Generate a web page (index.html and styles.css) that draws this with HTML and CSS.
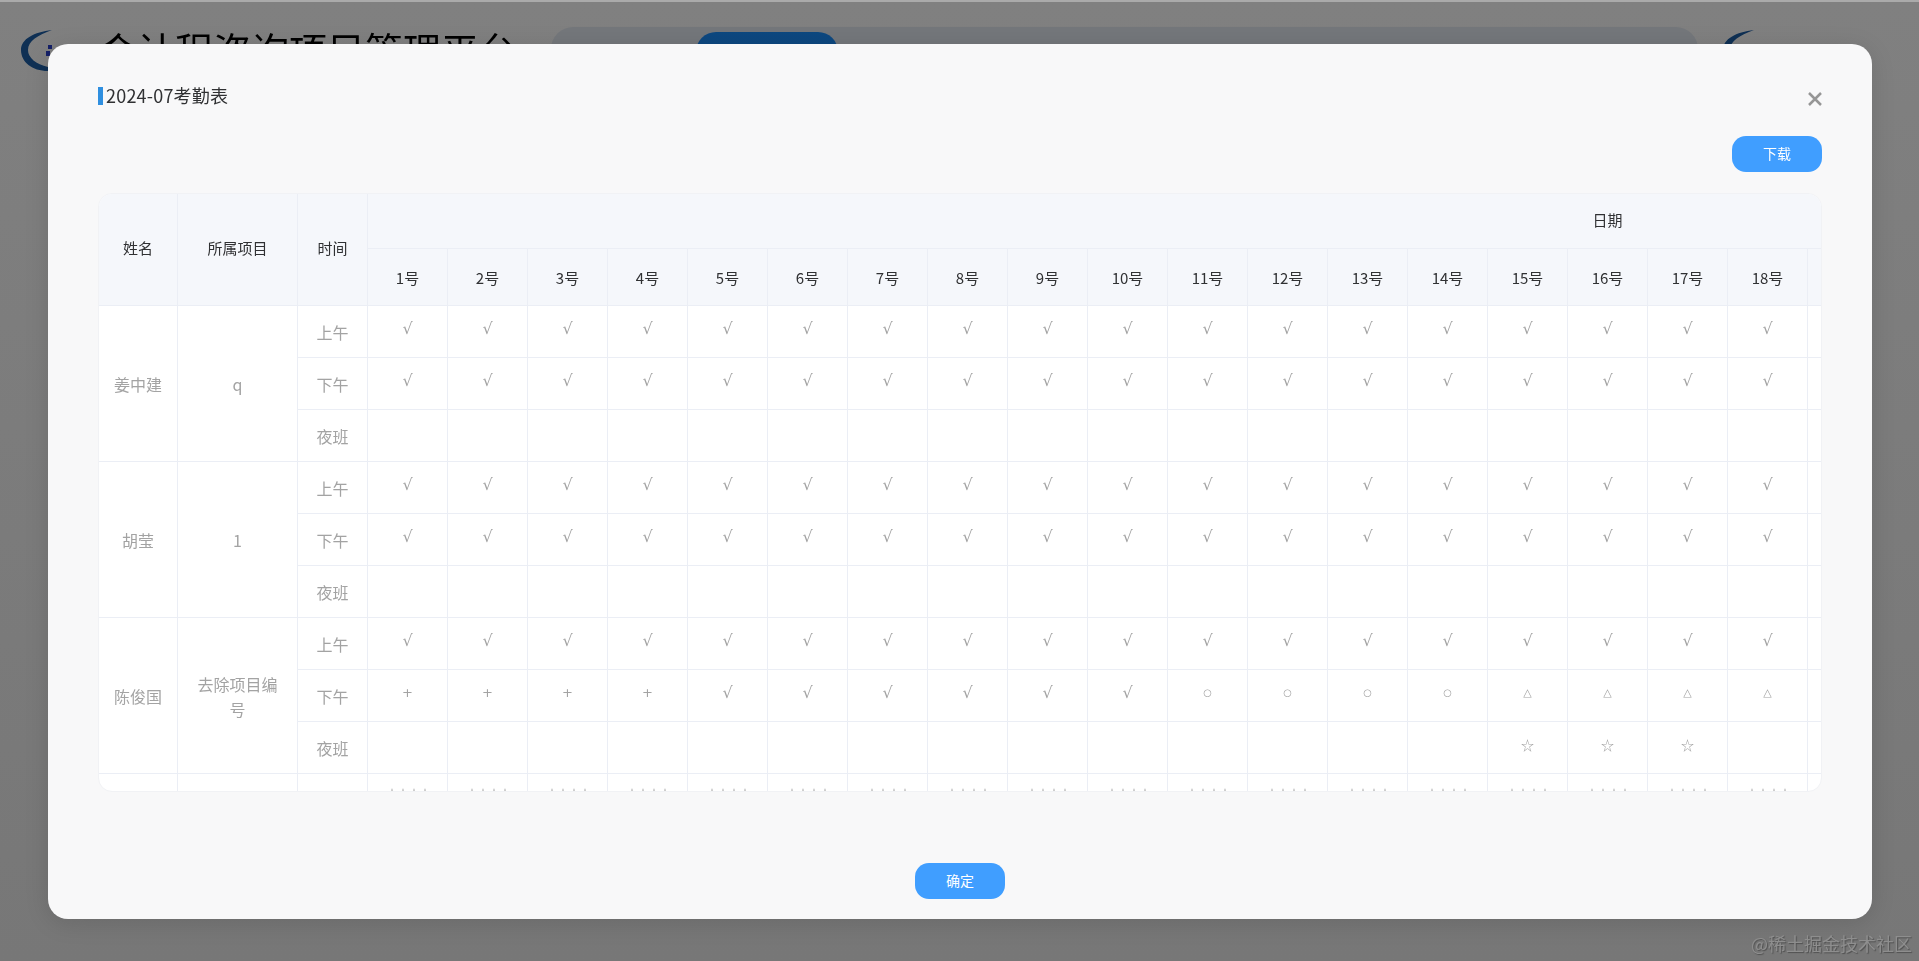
FILE: index.html
```html
<!DOCTYPE html>
<html lang="zh-CN">
<head>
    <meta charset="UTF-8">
    <title>2024-07考勤表</title>
    <link rel="stylesheet" href="styles.css">
</head>
<body>
    <header class="page-header">
        <svg class="logo" width="32" height="42" viewBox="0 0 32 42">
            <path d="M31 0C13 2 0 9 0 20c0 12 11 21 27 21v-4C15 34 7 28 7 20 7 11 17 5 31 0z" fill="#1d5fa8"/>
            <rect x="27" y="15" width="4" height="4" fill="#2a3fd0"/>
            <rect x="25" y="21" width="4" height="5" fill="#2a3fd0"/>
        </svg>
        <div class="page-title">会计程咨询项目管理平台</div>
        <div class="page-nav">
            <span class="page-nav-active"></span>
        </div>
        <svg class="logo logo-right" width="32" height="42" viewBox="0 0 32 42">
            <path d="M31 0C13 2 0 9 0 20c0 12 11 21 27 21v-4C15 34 7 28 7 20 7 11 17 5 31 0z" fill="#1d5fa8"/>
        </svg>
    </header>

    <div class="overlay"></div>

    <div class="dialog">
        <div class="dialog-title">2024-07考勤表</div>
        <svg class="dialog-close" width="14" height="14" viewBox="0 0 14 14">
            <path d="M1 1l12 12M13 1L1 13" stroke="#969696" stroke-width="2.5" fill="none"/>
        </svg>
        <div class="toolbar">
            <button class="button">下载</button>
        </div>
        <div class="table-wrap">
            <table class="sheet">
                <colgroup id="cols"></colgroup>
                <thead id="sheet-head"></thead>
                <tbody id="sheet-body"></tbody>
            </table>
        </div>
        <div class="dialog-footer">
            <button class="button">确定</button>
        </div>
    </div>

    <div class="watermark">@稀土掘金技术社区</div>

    <script src="app.js"></script>
</body>
</html>
```

FILE: styles.css
```css
* {
    box-sizing: border-box;
}
html, body {
    height: 100%;
}
body {
    margin: 0;
    overflow: hidden;
    background: #fff;
    font-family: "Noto Sans CJK SC", "Noto Sans", sans-serif;
    color: #333;
}
.page-header {
    display: flex;
    align-items: flex-start;
    padding: 30px 0 0 21px;
}
.logo {
    flex: none;
}
.page-title {
    margin: -3px 0 0 46px;
    width: 452px;
    font-size: 38px;
    line-height: 44px;
    color: #000;
    white-space: nowrap;
}
.page-nav {
    width: 1147px;
    height: 60px;
    margin-top: -3px;
    padding: 5px 0 0 145px;
    border-radius: 22px;
    background: #e8eef6;
}
.page-nav-active {
    display: block;
    width: 142px;
    height: 44px;
    border-radius: 20px;
    background: #1a8fff;
}
.logo-right {
    margin-left: 25px;
}
.overlay {
    position: absolute;
    inset: 0;
    background: linear-gradient(#808080, #777);
    mix-blend-mode: multiply;
    border-top: 2px solid #aaa;
}
.dialog {
    position: absolute;
    left: 48px;
    top: 44px;
    width: 1824px;
    height: 875px;
    display: flex;
    flex-direction: column;
    padding: 43px 50px 20px;
    border-radius: 20px;
    background: #f8f8f9;
    box-shadow: 0 4px 24px rgba(0, 0, 0, 0.12);
}
.dialog-title {
    height: 18px;
    padding-left: 3px;
    border-left: 5px solid #2f8fe0;
    font-size: 18px;
    line-height: 16px;
    letter-spacing: 0.2px;
    color: #303133;
}
.dialog-close {
    position: absolute;
    right: 50px;
    top: 48px;
}
.toolbar {
    display: flex;
    justify-content: flex-end;
    margin-top: 31px;
}
.button {
    width: 90px;
    height: 36px;
    padding: 0 0 2px;
    border: none;
    border-radius: 14px;
    background: #409eff;
    color: #fff;
    font-family: inherit;
    font-size: 14px;
}
.table-wrap {
    height: 599px;
    margin-top: 21px;
    overflow: hidden;
    border: 1px solid #f1f2f5;
    border-radius: 14px;
    background: #fff;
}
.sheet {
    width: 2749px;
    table-layout: fixed;
    border-collapse: separate;
    border-spacing: 0;
}
.sheet th, .sheet td {
    padding: 0;
    text-align: center;
    border-right: 1px solid #ebeef5;
    border-bottom: 1px solid #ebeef5;
}
.sheet th {
    background: #f5f7fb;
    font-size: 15px;
    font-weight: 400;
    color: #303133;
}
.sheet td {
    height: 52px;
    font-size: 16px;
    color: #a3a3a3;
}
.sheet th.head-top {
    padding-bottom: 4px;
}
.head-top {
    height: 55px;
}
.head-days {
    height: 57px;
}
.cell-wrap {
    padding: 2px 15px 0;
    line-height: 25px;
}
.sheet td.mark {
    padding-bottom: 6px;
    font-family: "DejaVu Sans", sans-serif;
    line-height: 20px;
}
.sheet td.mark-check {
    font-size: 16px;
}
.sheet td.mark-plus {
    font-size: 13px;
}
.sheet td.mark-circle {
    font-size: 10px;
}
.sheet td.mark-triangle {
    font-size: 11px;
}
.sheet td.mark-star {
    font-family: "Noto Sans CJK SC", sans-serif;
    font-size: 13px;
}
.sheet td.mark-stars {
    padding-bottom: 11px;
    font-family: "Noto Sans CJK SC", sans-serif;
    font-size: 13px;
    letter-spacing: -2px;
}
.dialog-footer {
    display: flex;
    justify-content: center;
    margin-top: auto;
}
.watermark {
    position: absolute;
    right: 7px;
    bottom: 8px;
    font-size: 18px;
    line-height: 20px;
    color: #8e8e8e;
    text-shadow: 1px 1px 1px #505050;
}
```

FILE: app.js
```js
const DAYS = 31;

const markClass = {
    '√': 'mark-check',
    '+': 'mark-plus',
    '○': 'mark-circle',
    '△': 'mark-triangle',
    '☆': 'mark-star',
    '☆☆☆☆': 'mark-stars'
};

// one entry per person: name, project, then marks for morning / afternoon / night
const people = [
    { name: '姜中建', project: 'q', am: day => '√', pm: day => '√', night: day => '' },
    { name: '胡莹', project: '1', am: day => '√', pm: day => '√', night: day => '' },
    {
        name: '陈俊国',
        project: '去除项目编号',
        am: day => '√',
        pm: day => {
            if (day <= 4) return '+';
            if (day <= 10) return '√';
            if (day <= 14) return '○';
            if (day <= 18) return '△';
            return '';
        },
        night: day => (day >= 15 && day <= 17 ? '☆' : '')
    },
    { name: '', project: '', am: day => '☆☆☆☆', pm: day => '', night: day => '' }
];

function dayCells(fn) {
    let html = '';
    for (let day = 1; day <= DAYS; day++) {
        const mark = fn(day);
        html += `<td class="mark ${markClass[mark] || ''}">${mark}</td>`;
    }
    return html;
}

let cols = '<col style="width:79px"><col style="width:120px"><col style="width:70px">';
let dayHead = '';
for (let day = 1; day <= DAYS; day++) {
    cols += '<col style="width:80px">';
    dayHead += `<th class="head-days">${day}号</th>`;
}
document.getElementById('cols').innerHTML = cols;

document.getElementById('sheet-head').innerHTML = `
    <tr>
        <th class="head-top" rowspan="2">姓名</th>
        <th class="head-top" rowspan="2">所属项目</th>
        <th class="head-top" rowspan="2">时间</th>
        <th class="head-top" colspan="${DAYS}">日期</th>
    </tr>
    <tr>${dayHead}</tr>
`;

document.getElementById('sheet-body').innerHTML = people.map(p => `
    <tr>
        <td rowspan="3">${p.name}</td>
        <td rowspan="3"><div class="cell-wrap">${p.project}</div></td>
        <td>上午</td>${dayCells(p.am)}
    </tr>
    <tr><td>下午</td>${dayCells(p.pm)}</tr>
    <tr><td>夜班</td>${dayCells(p.night)}</tr>
`).join('');
```
